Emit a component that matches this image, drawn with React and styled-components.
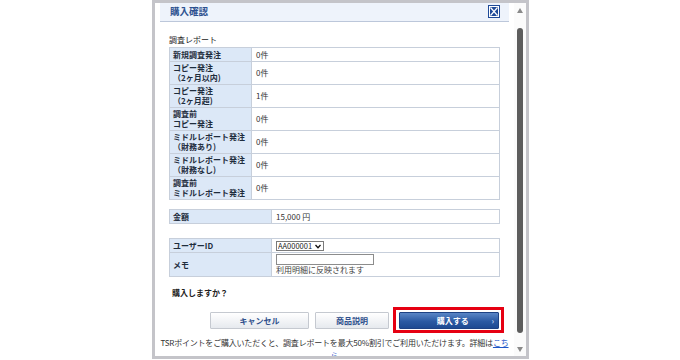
import styled, { createGlobalStyle } from "styled-components";

const GlobalStyle = createGlobalStyle`
  * { box-sizing: border-box; }
  body {
    margin: 0;
    background: #ffffff;
    font-family: "Noto Sans CJK JP", "Noto Sans", sans-serif;
    color: #222;
  }
`;

const Frame = styled.div`
  margin-left: 152px;
  width: 377px;
  height: 359px;
  border: 3px solid #c4c4c9;
  background: #fff;
  display: flex;
  overflow: hidden;
`;

const Content = styled.div`
  flex: 1;
  padding: 0 5px;
  overflow: hidden;
`;

const Header = styled.div`
  height: 19px;
  background: #eef3fb;
  border-bottom: 1px solid #bcc7da;
  display: flex;
  align-items: center;
  justify-content: space-between;
  padding: 0 9px 2px 10px;
`;

const Title = styled.h1`
  margin: 0;
  font-size: 9.5px;
  line-height: 12px;
  font-weight: 700;
  color: #2d5190;
`;

const Body = styled.div`
  padding: 13px 9px 0;
`;

const SectionTitle = styled.div`
  font-size: 8px;
  line-height: 10px;
  margin-bottom: 2px;
  color: #222;
`;

const Grid = styled.div`
  display: grid;
  grid-template-columns: ${(p) => p.labelWidth}px 1fr;
  border-top: 1px solid #c7cfdb;
  border-left: 1px solid #c7cfdb;
  margin-top: ${(p) => p.gap || 0}px;
`;

const Label = styled.div`
  height: ${(p) => p.h}px;
  background: #dce8f7;
  border-right: 1px solid #c7cfdb;
  border-bottom: 1px solid #c7cfdb;
  padding: 0 3px;
  display: flex;
  flex-direction: column;
  justify-content: center;
  font-size: 8px;
  line-height: 10px;
  font-weight: 700;
  color: #1f2d3d;
`;

const Value = styled.div`
  height: ${(p) => p.h}px;
  border-right: 1px solid #c7cfdb;
  border-bottom: 1px solid #c7cfdb;
  padding: 0 3px 0 4px;
  display: flex;
  flex-direction: column;
  justify-content: center;
  align-items: flex-start;
  font-size: 8px;
  line-height: 10px;
  color: #333;
`;

const SelectBox = styled.div`
  display: flex;
  align-items: center;
  gap: 2px;
  height: 10px;
  border: 1px solid #7a7a7a;
  padding: 0 2px 0 1px;
  background: #fff;
  margin-top: 1px;
`;

const NativeSelect = styled.select`
  appearance: none;
  border: none;
  background: transparent;
  padding: 0;
  margin: 0;
  font-family: inherit;
  font-size: 7.5px;
  line-height: 8px;
  height: 8px;
  color: #222;
  outline: none;
`;

const MemoInput = styled.input`
  width: 98px;
  height: 11px;
  border: 1px solid #8c8c8c;
  padding: 0 2px;
  margin: 0;
  font-size: 8px;
`;

const Hint = styled.span`
  font-size: 8px;
  line-height: 10px;
  color: #444;
`;

const Question = styled.div`
  margin-top: 11px;
  padding-left: 3px;
  font-size: 8px;
  line-height: 10px;
  font-weight: 700;
  color: #222;
`;

const ButtonRow = styled.div`
  margin-top: 9px;
  padding-left: 50px;
  display: flex;
  align-items: center;
  gap: 6px;
`;

const Button = styled.button`
  width: ${(p) => p.w}px;
  height: 17px;
  border: 1px solid #c5c9d0;
  border-radius: 1px;
  background: linear-gradient(#ffffff, #e6e9ee);
  font-family: inherit;
  font-size: 8px;
  font-weight: 700;
  color: #2e4f8c;
  padding: 0;
  cursor: pointer;
`;

const Highlight = styled.div`
  margin-left: -2px;
  border: 3px solid #e60012;
  padding: 2px 2px 1px 3px;
  display: flex;
`;

const PrimaryButton = styled.button`
  width: 100px;
  height: 17px;
  border: 1px solid #1d4284;
  border-radius: 1px;
  background: linear-gradient(#5a86c6, #2b5aa3 55%, #1e4a92);
  font-family: inherit;
  font-size: 8px;
  font-weight: 700;
  color: #fff;
  display: flex;
  align-items: center;
  justify-content: space-between;
  padding: 0 4px 0 14px;
  cursor: pointer;
`;

const ButtonText = styled.span`
  flex: 1;
  text-align: center;
`;

const ArrowMark = styled.span`
  color: #b9cdee;
  font-size: 8px;
`;

const Footer = styled.p`
  margin: 3px -2px 0;
  text-align: center;
  font-size: 8px;
  line-height: 13px;
  letter-spacing: -0.2px;
  color: #333;
`;

const Link = styled.a`
  color: #1d56c8;
  text-decoration: underline;
`;

const ScrollTrack = styled.div`
  width: 12px;
  background: #fbfbfb;
  display: flex;
  flex-direction: column;
  align-items: center;
  padding: 5px 0 4px;
`;

const Thumb = styled.div`
  flex: 1;
  width: 6px;
  margin: 15px 0 14px;
  border-radius: 3px;
  background: #5d5d5d;
`;

const CloseIcon = () => (
  <svg width="12" height="13" viewBox="0 0 12 13">
    <rect x="0" y="0" width="12" height="13" fill="#1f4a98" />
    <rect x="1.5" y="1.5" width="9" height="10" fill="none" stroke="#fff" strokeWidth="1" />
    <path d="M2.5 2.5 L9.5 10.5 M9.5 2.5 L2.5 10.5" stroke="#fff" strokeWidth="1.2" />
  </svg>
);

const Arrow = ({ down }) => (
  <svg width="6" height="5" viewBox="0 0 6 5">
    <path d={down ? "M0 0 L6 0 L3 5 Z" : "M0 5 L6 5 L3 0 Z"} fill="#8a8a8a" />
  </svg>
);

const Chevron = () => (
  <svg width="6" height="5" viewBox="0 0 6 5">
    <path d="M0.5 1 L3 3.8 L5.5 1" fill="none" stroke="#111" strokeWidth="1.3" />
  </svg>
);

const reportRows = [
  { label: ["新規調査発注"], value: "0件" },
  { label: ["コピー発注", "（2ヶ月以内)"], value: "0件" },
  { label: ["コピー発注", "（2ヶ月超)"], value: "1件" },
  { label: ["調査前", "コピー発注"], value: "0件" },
  { label: ["ミドルレポート発注", "（財務あり)"], value: "0件" },
  { label: ["ミドルレポート発注", "（財務なし)"], value: "0件" },
  { label: ["調査前", "ミドルレポート発注"], value: "0件" },
];

export default function App() {
  return (
    <>
      <GlobalStyle />
      <Frame>
        <Content>
          <Header>
            <Title>購入確認</Title>
            <CloseIcon />
          </Header>
          <Body>
            <SectionTitle>調査レポート</SectionTitle>
            <Grid labelWidth={82}>
              {reportRows.map((row) => {
                const h = row.label.length > 1 ? 23 : 14;
                return [
                  <Label key={row.label.join() + "l"} h={h}>
                    {row.label.map((line) => (
                      <span key={line}>{line}</span>
                    ))}
                  </Label>,
                  <Value key={row.label.join() + "v"} h={h}>
                    {row.value}
                  </Value>,
                ];
              })}
            </Grid>

            <Grid labelWidth={102} gap={9}>
              <Label h={14}>金額</Label>
              <Value h={14}>15,000 円</Value>
            </Grid>

            <Grid labelWidth={102} gap={14}>
              <Label h={14}>ユーザーID</Label>
              <Value h={14}>
                <SelectBox>
                  <NativeSelect defaultValue="AA000001">
                    <option value="AA000001">AA000001</option>
                  </NativeSelect>
                  <Chevron />
                </SelectBox>
              </Value>
              <Label h={24}>メモ</Label>
              <Value h={24}>
                <MemoInput type="text" />
                <Hint>利用明細に反映されます</Hint>
              </Value>
            </Grid>

            <Question>購入しますか？</Question>
          </Body>

          <ButtonRow>
            <Button w={99}>キャンセル</Button>
            <Button w={74}>商品説明</Button>
            <Highlight>
              <PrimaryButton>
                <ButtonText>購入する</ButtonText>
                <ArrowMark>›</ArrowMark>
              </PrimaryButton>
            </Highlight>
          </ButtonRow>

          <Footer>
            TSRポイントをご購入いただくと、調査レポートを最大50%割引でご利用いただけます。詳細は
            <Link href="#">こち</Link>
            <br />
            <Link href="#">ら</Link>
          </Footer>
        </Content>
        <ScrollTrack>
          <Arrow />
          <Thumb />
          <Arrow down />
        </ScrollTrack>
      </Frame>
    </>
  );
}
